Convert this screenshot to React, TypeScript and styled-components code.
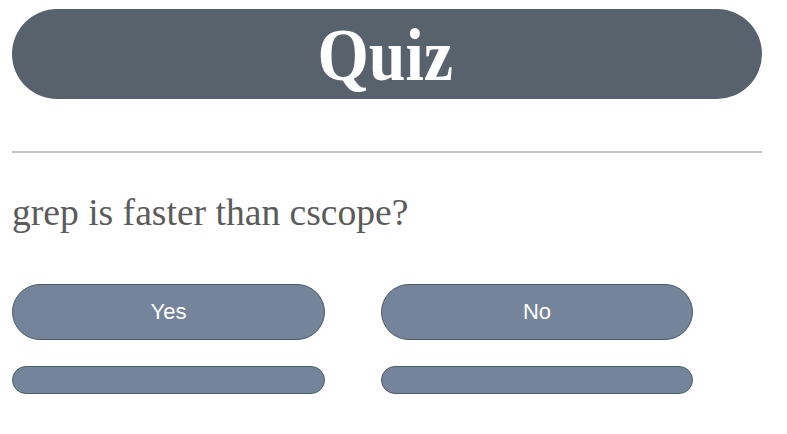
import React from "react";
import styled, { createGlobalStyle } from "styled-components";

const Global = createGlobalStyle`
  html, body { margin: 0; padding: 0; background: #ffffff; }
  body { font-family: "Liberation Serif", "Times New Roman", serif; }
`;

const Page = styled.div`
  width: 750px;
  padding: 9px 25px 0 12px;
  display: flex;
  flex-direction: column;
`;

const Header = styled.header`
  height: 90px;
  border-radius: 45px;
  background: #57626c;
  display: flex;
  align-items: center;
  justify-content: center;
`;

const Title = styled.h1`
  margin: 0;
  color: #ffffff;
  font-family: "Liberation Serif", "Times New Roman", serif;
  font-weight: bold;
  font-size: 75px;
  line-height: 90px;
  transform: scaleX(0.88) translate(-2px, 1px);
`;

const Divider = styled.hr`
  margin: 52px 0 0 0;
  border: none;
  border-top: 2px solid #c4c4c4;
  height: 0;
`;

const Question = styled.p`
  margin: 38px 0 0 0;
  font-family: "Liberation Serif", "Times New Roman", serif;
  font-size: 37.6px;
  line-height: 43px;
  color: #5b5b5b;
`;

const Grid = styled.div<{ $top: number }>`
  display: grid;
  grid-template-columns: 313px 312px;
  column-gap: 56px;
  margin-top: ${(p) => p.$top}px;
`;

const Answer = styled.button<{ $h: number }>`
  height: ${(p) => p.$h}px;
  border-radius: ${(p) => p.$h / 2}px;
  background: #74849a;
  border: 1px solid #4d5a6b;
  color: #ffffff;
  font-family: "Liberation Sans", Arial, sans-serif;
  font-size: 22px;
  padding: 0;
  box-sizing: border-box;
`;

export default function App() {
  return (
    <>
      <Global />
      <Page>
        <Header>
          <Title>Quiz</Title>
        </Header>
        <Divider />
        <Question>grep is faster than cscope?</Question>
        <Grid $top={50}>
          <Answer $h={56}>Yes</Answer>
          <Answer $h={56}>No</Answer>
        </Grid>
        <Grid $top={26}>
          <Answer $h={28} aria-label="empty" />
          <Answer $h={28} aria-label="empty" />
        </Grid>
      </Page>
    </>
  );
}
